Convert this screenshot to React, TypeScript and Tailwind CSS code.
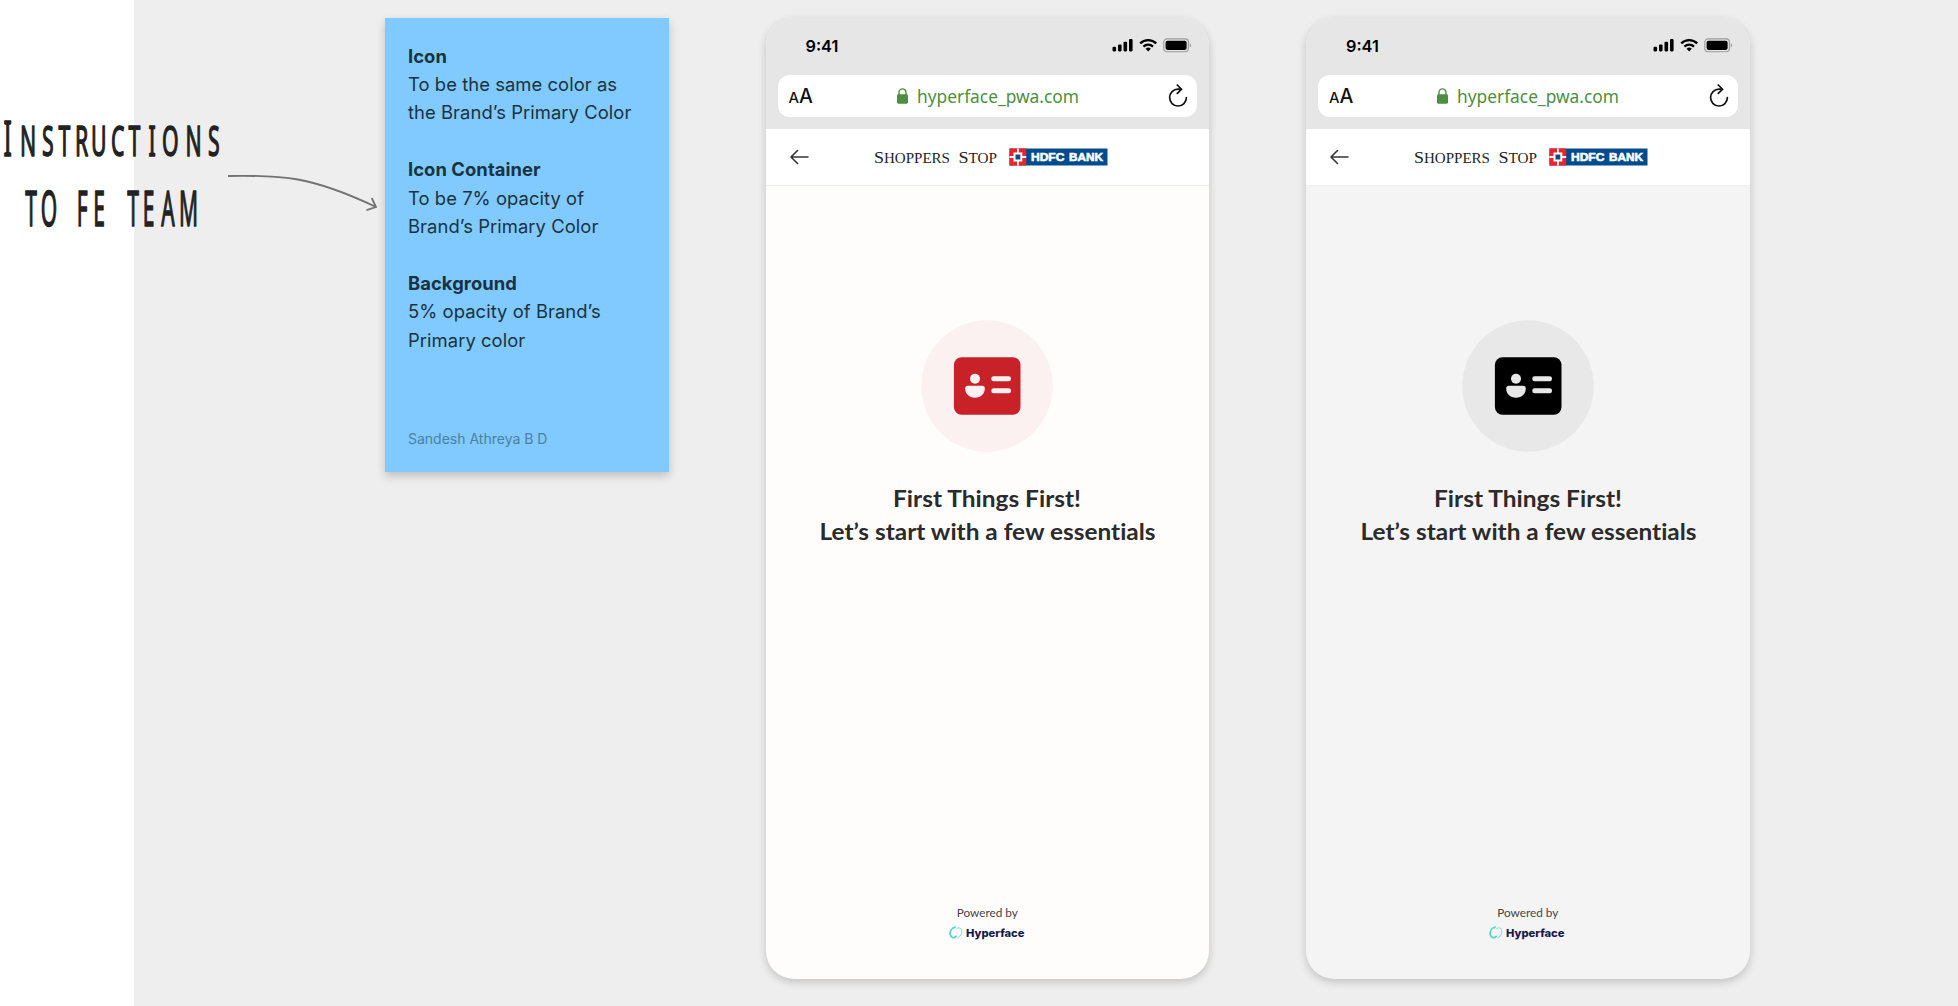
type Theme = { page: string; circle: string; card: string };

const red: Theme = { page: "bg-[#fffdfc]", circle: "fill-[#fbf1f1]", card: "fill-[#c82128]" };
const black: Theme = { page: "bg-[#f4f4f4]", circle: "fill-[#e8e8e8]", card: "fill-black" };

function Heading() {
  return (
    <h1 className="w-[222px] shrink-0 text-[#222]">
      <svg
        className="overflow-visible"
        viewBox="0 0 222 130"
        width="222"
        height="130"
        fill="currentColor"
        stroke="currentColor"
        strokeWidth="1.5"
        strokeLinejoin="round"
        fontFamily="Noto Sans, sans-serif"
      >
        <text transform="translate(0 45.6) scale(.5 1)" fontSize="42.5" x="7 40 84 117 150 182 222 257 297 324 371 416">
          <tspan fontSize="49">I</tspan>NSTRUCTIONS
        </text>
        <text transform="translate(0 115.6) scale(.42 1)" fontSize="50" x="60 97 140 183 222 260 303 340 384 426">
          TO FE TEAM
        </text>
      </svg>
    </h1>
  );
}

function Note() {
  return (
    <section className="flex h-[454px] w-[284px] shrink-0 flex-col justify-between bg-[#80caff] pr-5 pl-[23.5px] pt-6 pb-[22px] font-['Inter'] text-[18.4px] leading-[28.4px] tracking-[0.06px] whitespace-nowrap text-[#1b3240] shadow-[0_4px_9px_rgba(0,0,0,0.2)]">
      <div>
        <div className="mb-[28.4px]">
          <h2 className="font-bold">Icon</h2>
          <p>To be the same color as<br />the Brand’s Primary Color</p>
        </div>
        <div className="mb-[28.4px]">
          <h2 className="font-bold">Icon Container</h2>
          <p>To be 7% opacity of<br />Brand’s Primary Color</p>
        </div>
        <div>
          <h2 className="font-bold">Background</h2>
          <p>5% opacity of Brand’s<br />Primary color</p>
        </div>
      </div>
      <p className="text-sm leading-[22px] tracking-normal text-[#4d80a3]">Sandesh Athreya B D</p>
    </section>
  );
}

function StatusIcons() {
  return (
    <svg width="80" height="16" viewBox="0 0 80 16">
      <rect x="0.5" y="8.8" width="3.6" height="4.6" rx="1.1" />
      <rect x="6" y="6.4" width="3.6" height="7" rx="1.1" />
      <rect x="11.5" y="3.7" width="3.6" height="9.7" rx="1.1" />
      <rect x="17" y="1" width="3.6" height="12.4" rx="1.1" />
      <g fill="none" stroke="black" strokeWidth="2.3">
        <path d="M28.2 5.3a11.5 11.5 0 0 1 16 0" />
        <path d="M31.4 8.6a7 7 0 0 1 9.6 0" />
      </g>
      <path d="M33.6 10.8a3.8 3.8 0 0 1 5.2 0l-2.6 2.8z" />
      <rect x="51.8" y="0.9" width="24.6" height="12.8" rx="3.2" fill="none" stroke="#9a9a9a" strokeWidth="1.1" />
      <rect x="53.6" y="2.7" width="21" height="9.2" rx="1.8" />
      <path d="M77.8 5v4.6a2.6 2.6 0 0 0 0-4.6z" fill="#9a9a9a" />
    </svg>
  );
}

function BrandLogos() {
  return (
    <svg width="236" height="20" viewBox="0 0 236 20">
      <g fontFamily="Liberation Serif, serif" fill="#242424">
        <text x="0" y="15.5" fontSize="17" textLength="76" lengthAdjust="spacingAndGlyphs">S<tspan fontSize="14.3">HOPPERS</tspan></text>
        <text x="84.5" y="15.5" fontSize="17" textLength="38.5" lengthAdjust="spacingAndGlyphs">S<tspan fontSize="14.3">TOP</tspan></text>
      </g>
      <rect x="135.5" y="1.5" width="98" height="17" fill="#004c8f" />
      <rect x="135.5" y="1.5" width="16.7" height="17" fill="#ed232a" />
      <path d="M143.9 1.5v17M135.5 10h16.7" stroke="white" strokeWidth="1.8" />
      <rect x="139.5" y="5.5" width="8.8" height="9" fill="white" />
      <rect x="141.5" y="7.5" width="4.8" height="5" fill="#004c8f" />
      <g fontFamily="Liberation Sans, sans-serif" fontWeight="700" fontSize="11.2" fill="white" stroke="white" strokeWidth="0.6">
        <text x="157" y="14" textLength="33.4" lengthAdjust="spacingAndGlyphs">HDFC</text>
        <text x="195" y="14" textLength="34" lengthAdjust="spacingAndGlyphs">BANK</text>
      </g>
    </svg>
  );
}

function IdBadge({ theme }: { theme: Theme }) {
  return (
    <svg width="132" height="132" viewBox="0 0 132 132">
      <circle cx="66" cy="66" r="65.7" className={theme.circle} />
      <rect x="32.9" y="37.2" width="66.6" height="57.5" rx="7.6" className={theme.card} />
      <g className={theme.circle}>
        <circle cx="54" cy="58.8" r="5" />
        <path d="M46.8 65.8h14.4q2.6 0 2.6 2.6c0 5.2-4 9.3-9.8 9.3s-9.8-4.1-9.8-9.3q0-2.6 2.6-2.6z" />
        <rect x="70.3" y="56.2" width="19.7" height="5.1" rx="2.4" />
        <rect x="70.3" y="68.2" width="19.7" height="5.1" rx="2.4" />
      </g>
    </svg>
  );
}

function Phone({ theme }: { theme: Theme }) {
  return (
    <article className={`flex h-[961px] w-[443.5px] shrink-0 flex-col overflow-hidden rounded-[28px] shadow-[0_3px_9px_rgba(0,0,0,0.19)] ${theme.page}`}>
      <div className="flex h-[111.5px] shrink-0 flex-col bg-[#e6e6e6] px-3">
        <div className="flex h-[57px] items-center justify-between pr-[5px] pl-7">
          <span className="font-['Inter'] text-[16.3px] font-semibold text-black">9:41</span>
          <StatusIcons />
        </div>
        <div className="flex h-[42.5px] items-center justify-between rounded-xl bg-white pr-[9px] pl-[11px] text-[#111]">
          <span className="mt-0.5 flex items-baseline font-['Inter'] font-medium">
            <span className="text-[14.8px]">A</span>
            <span className="text-[19.6px]">A</span>
          </span>
          <span className="mr-1 flex items-center gap-[9px] text-[#4b8f3f]">
            <svg width="11" height="16" viewBox="0 0 11 16" fill="currentColor">
              <rect y="6.2" width="11" height="9.5" rx="1.4" />
              <path d="M2 7V4.4a3.5 3.5 0 0 1 7 0V7" fill="none" stroke="currentColor" strokeWidth="1.4" />
            </svg>
            <svg width="163" height="32" viewBox="0 -2 163 32" fill="currentColor">
              <text x="0" y="21" fontFamily="Noto Sans, sans-serif" fontSize="18.6" textLength="162" lengthAdjust="spacingAndGlyphs">hyperface_pwa.com</text>
            </svg>
          </span>
          <svg width="20" height="24" viewBox="0 0 20 24" fill="none" stroke="currentColor" strokeWidth="1.7" strokeLinecap="round">
            <path d="M11.8 5.2H10a8.4 8.4 0 1 0 8.4 8.4" />
            <path d="M9.3 1l4.2 4.2-4.2 4.2" />
          </svg>
        </div>
      </div>
      <header className="flex h-[57px] shrink-0 items-center border-b border-[#eeeeee] bg-white pl-6">
        <svg width="19" height="16" viewBox="0 0 19 16" fill="none" stroke="#343434" strokeWidth="1.6" strokeLinecap="round" strokeLinejoin="round">
          <path d="M18 8H1M7.5 1.5L1 8l6.5 6.5" />
        </svg>
        <div className="ml-[65px]">
          <BrandLogos />
        </div>
      </header>
      <main className="flex flex-1 flex-col items-center pt-[133.5px] pb-[37px]">
        <IdBadge theme={theme} />
        <div className="mt-[30px] text-[#2b2b2b]">
          <svg width="340" height="68" viewBox="0 0 340 68" fill="currentColor" fontFamily="Lato, sans-serif" fontWeight="700" fontSize="23.4" className="[font-variant-ligatures:none]">
            <text x="76" y="25" textLength="188" lengthAdjust="spacingAndGlyphs">First Things First!</text>
            <text x="2.5" y="58.3" textLength="336" lengthAdjust="spacingAndGlyphs">Let’s start with a few essentials</text>
          </svg>
        </div>
        <footer className="mt-auto flex flex-col items-center gap-0.5">
          <p className="font-['Lato'] text-[11.8px] leading-[18px] text-[#444]">Powered by</p>
          <div className="flex items-center gap-[3px]">
            <svg width="14" height="14" viewBox="0 0 14 14" fill="none" strokeLinecap="round">
              <path d="M6 1.2C2.6 2.2.6 5.4 1.3 8.8c.7 2.9 3.7 3.8 5.8 1.6" stroke="#52d8c6" strokeWidth="1.8" />
              <path d="M7.6 2.8C9.4.9 12.2 1.8 12.7 4.6c.5 3.2-1.3 5.8-4 7.4" stroke="#8ce4e0" strokeWidth="1.1" />
            </svg>
            <svg width="60" height="18" viewBox="0 0 60 18" fill="#161a4a">
              <text x="0" y="12.8" fontFamily="Inter, sans-serif" fontWeight="800" fontSize="10.8" textLength="58.5" lengthAdjust="spacingAndGlyphs">Hyperface</text>
            </svg>
          </div>
        </footer>
      </main>
    </article>
  );
}

export default function App() {
  return (
    <div className="relative flex h-[1006px] w-[1958px] items-start overflow-hidden bg-[#eeeeee] pt-[17.5px]">
      <div className="absolute inset-y-0 left-0 w-[134px] bg-white" />
      <div className="relative flex items-start">
        <div className="mt-[92.5px] flex w-[384.5px] shrink-0 items-start">
          <Heading />
          <svg className="mt-[59px] ml-1.5 shrink-0" width="150" height="46" viewBox="0 0 150 46" fill="none" stroke="#737373" strokeWidth="1.8">
            <path d="M0 7C54 6 83 7 148 38M143.7 29L148 38l-9.5 3.2" />
          </svg>
        </div>
        <Note />
        <div className="ml-[97px] flex gap-[97px]">
          <Phone theme={red} />
          <Phone theme={black} />
        </div>
      </div>
    </div>
  );
}
